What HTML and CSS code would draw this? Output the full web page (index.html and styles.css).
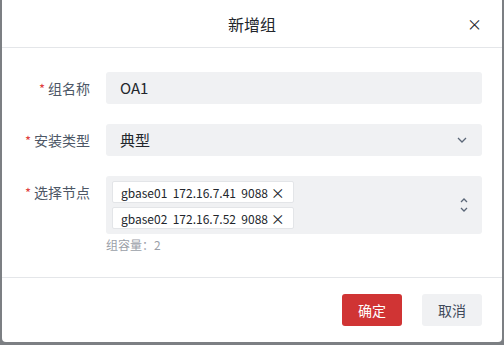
FILE: index.html
```html
<!DOCTYPE html>
<html lang="zh-CN">
<head>
    <meta charset="UTF-8">
    <meta name="viewport" content="width=device-width, initial-scale=1.0">
    <title>新增组</title>
    <link rel="stylesheet" href="styles.css">
</head>
<body>
    <div class="dialog">
        <!-- Header -->
        <div class="dialog-header">
            <span class="dialog-title">新增组</span>
            <span class="close-btn">&times;</span>
        </div>

        <!-- Form -->
        <div class="dialog-body">
            <div class="form-row">
                <label class="form-label"><span class="req">*</span>组名称</label>
                <div class="form-field">
                    <div class="input">OA1</div>
                </div>
            </div>

            <div class="form-row">
                <label class="form-label"><span class="req">*</span>安装类型</label>
                <div class="form-field">
                    <div class="input select">
                        <span>典型</span>
                        <svg class="arrow" width="12" height="8" viewBox="0 0 12 8"><path d="M2 2l4 4 4-4" fill="none" stroke="#5b6778" stroke-width="1.3"/></svg>
                    </div>
                </div>
            </div>

            <div class="form-row">
                <label class="form-label"><span class="req">*</span>选择节点</label>
                <div class="form-field">
                    <div class="input multi">
                        <div class="tags">
                            <span class="tag">gbase01&nbsp;&nbsp;172.16.7.41&nbsp;&nbsp;9088 <i>&times;</i></span>
                            <span class="tag">gbase02&nbsp;&nbsp;172.16.7.52&nbsp;&nbsp;9088 <i>&times;</i></span>
                        </div>
                        <svg class="arrow" width="12" height="18" viewBox="0 0 12 18"><path d="M3 6l3-3 3 3M3 12l3 3 3-3" fill="none" stroke="#5b6778" stroke-width="1.3"/></svg>
                    </div>
                    <div class="hint">组容量：2</div>
                </div>
            </div>
        </div>

        <!-- Footer -->
        <div class="dialog-footer">
            <button class="btn btn-primary">确定</button>
            <button class="btn btn-default">取消</button>
        </div>
    </div>
</body>
</html>
```

FILE: styles.css
```css
/* Global */
body {
    margin: 0;
    padding: 0;
    background-color: #7c7f83;
    font-family: "Noto Sans CJK SC", "Noto Sans", sans-serif;
    color: #2b2f36;
    height: 345px;
    overflow: hidden;
}

/* Dialog */
.dialog {
    margin-left: 2px;
    width: 500px;
    height: 342px;
    background: #fff;
    border-radius: 0 0 4px 4px;
    display: flex;
    flex-direction: column;
}

.dialog-header {
    height: 47px;
    border-bottom: 1px solid #e4e6e9;
    display: flex;
    align-items: center;
    justify-content: center;
    position: relative;
}

.dialog-title {
    font-size: 16px;
    color: #22262c;
}

.close-btn {
    position: absolute;
    right: 20px;
    top: 13px;
    font-size: 15px;
    color: #22262c;
}

.dialog-body {
    flex-grow: 1;
    padding: 24px 20px 0 0;
    display: flex;
    flex-direction: column;
    gap: 20px;
}

.form-row {
    display: flex;
    align-items: flex-start;
}

.form-label {
    width: 104px;
    height: 32px;
    flex-shrink: 0;
    display: flex;
    align-items: center;
    justify-content: flex-end;
    padding-right: 16px;
    box-sizing: border-box;
    font-size: 14px;
    color: #4d5766;
}

.req {
    color: #e0403e;
    margin-right: 3px;
    font-size: 13px;
}

.form-field {
    flex-grow: 1;
}

.input {
    background: #f0f1f3;
    border-radius: 3px;
    height: 32px;
    padding: 0 14px;
    font-size: 15px;
    line-height: 32px;
    color: #22262c;
}

.select {
    display: flex;
    justify-content: space-between;
    align-items: center;
}

.multi {
    height: 58px;
    padding: 5px 12px 5px 6px;
    box-sizing: border-box;
    display: flex;
    justify-content: space-between;
    align-items: center;
}

.tags {
    display: flex;
    flex-direction: column;
    gap: 4px;
    align-items: flex-start;
}

.tag {
    background: #fff;
    border: 1px solid #e3e5e8;
    border-radius: 2px;
    height: 20px;
    line-height: 20px;
    padding: 0 8px 0 8px;
    font-size: 12px;
    color: #22262c;
}

.tag i {
    font-style: normal;
    font-size: 14px;
}

.hint {
    font-size: 12px;
    color: #9aa0a8;
    margin-top: 2px;
}

/* Footer */
.dialog-footer {
    border-top: 1px solid #e4e6e9;
    height: 64px;
    display: flex;
    justify-content: flex-end;
    align-items: center;
    gap: 20px;
    padding-right: 20px;
}

.btn {
    width: 60px;
    height: 32px;
    border: none;
    border-radius: 3px;
    font-family: "Noto Sans CJK SC", sans-serif;
    font-size: 14px;
    cursor: pointer;
}

.btn-primary {
    background: #d03434;
    color: #fff;
}

.btn-default {
    background: #f0f1f3;
    color: #3f4a5a;
}
```
